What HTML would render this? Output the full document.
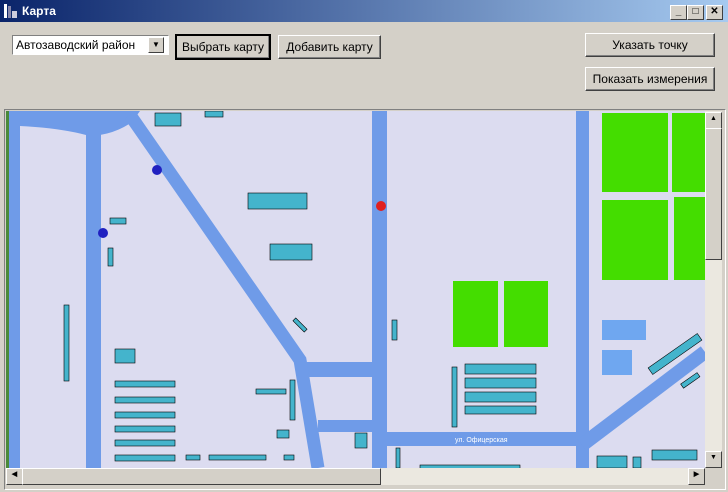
<!DOCTYPE html><html><head><meta charset="utf-8"><style>
body{margin:0;width:728px;height:492px;background:#d4d0c8;font-family:"Liberation Sans",sans-serif;font-size:12px;position:relative;overflow:hidden}
.t{position:absolute;left:0;top:0;width:728px;height:22px;background:linear-gradient(90deg,#0a246a,#a6caf0);}
.t span{position:absolute;left:22px;top:4px;color:#fff;font-weight:bold;font-size:12px}
.wb{position:absolute;top:5px;width:15px;height:13px;background:#d4d0c8;border:1px solid;border-color:#fff #404040 #404040 #fff;font-size:10px;line-height:12px;text-align:center;font-weight:bold}
.btn{position:absolute;background:#d4d0c8;border:1px solid;border-color:#fff #404040 #404040 #fff;box-shadow:inset -1px -1px #808080;text-align:center;line-height:22px;height:22px}
</style></head><body>
<div class="t"><svg style="position:absolute;left:3px;top:3px" width="16" height="16"><rect x="1" y="1" width="3" height="14" fill="#fff"/><rect x="5" y="3" width="3" height="12" fill="#88a"/><rect x="9" y="8" width="5" height="7" fill="#ccd"/></svg><span>Карта</span>
<div class="wb" style="left:670px">_</div><div class="wb" style="left:687px">□</div><div class="wb" style="left:706px">✕</div></div>
<div style="position:absolute;left:12px;top:35px;width:152px;height:18px;background:#fff;border:1px solid;border-color:#808080 #fff #fff #808080;line-height:18px;padding-left:3px">Автозаводский район</div>
<div style="position:absolute;left:148px;top:37px;width:14px;height:14px;background:#d4d0c8;border:1px solid;border-color:#fff #404040 #404040 #fff;font-size:8px;text-align:center;line-height:14px">▼</div>
<div class="btn" style="left:175px;top:34px;width:92px;border:2px solid #000">Выбрать карту</div>
<div class="btn" style="left:278px;top:35px;width:101px">Добавить карту</div>
<div class="btn" style="left:585px;top:33px;width:128px">Указать точку</div>
<div class="btn" style="left:585px;top:67px;width:128px">Показать измерения</div>
<div style="position:absolute;left:4px;top:109px;width:720px;height:379px;border:1px solid;border-color:#808080 #fff #fff #808080"></div>
<svg style="position:absolute;left:6px;top:111px" width="699" height="357" viewBox="6 111 699 357">
<rect x="6" y="111" width="699" height="357" fill="#dcdcf0"/>
<g fill="#6f9be8" stroke="none">
<rect x="9" y="111" width="11" height="357"/>
<rect x="86" y="111" width="15" height="357"/>
<rect x="372" y="111" width="15" height="357"/>
<rect x="576" y="111" width="13" height="357"/>
<rect x="300" y="362" width="72" height="15"/>
<rect x="318" y="420" width="54" height="12"/>
<rect x="387" y="432" width="189" height="14"/>
<path d="M9,111 L140,111 L132,122 Q118,132 100,135 L86,135 Q60,128 20,126 L9,126Z"/>
</g>
<rect x="6" y="111" width="3" height="357" fill="#4a8a3a"/>
<g stroke="#6f9be8" fill="none" stroke-linecap="butt">
<polyline points="130,115 300,360 318,468" stroke-width="13"/>
<line x1="582" y1="445" x2="705" y2="352" stroke-width="14"/>
</g>
<g fill="#44dd00">
<rect x="602" y="113" width="66" height="79"/><rect x="672" y="113" width="33" height="79"/>
<rect x="602" y="200" width="66" height="80"/><rect x="674" y="197" width="31" height="83"/>
<rect x="453" y="281" width="45" height="66"/><rect x="504" y="281" width="44" height="66"/>
</g>
<g fill="#44b4cc" stroke="#000" stroke-width="0.6">
<rect x="155" y="113" width="26" height="13"/><rect x="205" y="111" width="18" height="6"/>
<rect x="248" y="193" width="59" height="16"/><rect x="270" y="244" width="42" height="16"/>
<rect x="110" y="218" width="16" height="6"/><rect x="108" y="248" width="5" height="18"/>
<rect x="64" y="305" width="5" height="76"/><rect x="115" y="349" width="20" height="14"/>
<rect x="115" y="381" width="60" height="6"/><rect x="115" y="397" width="60" height="6"/>
<rect x="115" y="412" width="60" height="6"/><rect x="115" y="426" width="60" height="6"/>
<rect x="115" y="440" width="60" height="6"/><rect x="115" y="455" width="60" height="6"/>
<rect x="186" y="455" width="14" height="5"/><rect x="209" y="455" width="57" height="5"/>
<rect x="284" y="455" width="10" height="5"/><rect x="256" y="389" width="30" height="5"/>
<rect x="290" y="380" width="5" height="40"/><rect x="277" y="430" width="12" height="8"/>
<rect x="355" y="433" width="12" height="15"/><rect x="392" y="320" width="5" height="20"/>
<rect x="452" y="367" width="5" height="60"/>
<rect x="465" y="364" width="71" height="10"/><rect x="465" y="378" width="71" height="10"/>
<rect x="465" y="392" width="71" height="10"/><rect x="465" y="406" width="71" height="8"/>
<rect x="420" y="465" width="100" height="5"/><rect x="396" y="448" width="4" height="20"/>
<rect x="597" y="456" width="30" height="12"/><rect x="633" y="457" width="8" height="11"/>
<rect x="292" y="323" width="16" height="4" transform="rotate(45 300 325)"/>
<rect x="645" y="350" width="60" height="8" transform="rotate(-35 675 354)"/>
<rect x="680" y="378" width="20" height="5" transform="rotate(-35 690 380)"/>
<rect x="652" y="450" width="45" height="10"/>
</g>
<g fill="#6fa7f0"><rect x="602" y="320" width="44" height="20"/><rect x="602" y="350" width="30" height="25"/></g>
<circle cx="157" cy="170" r="5" fill="#2020c0"/><circle cx="103" cy="233" r="5" fill="#2020c0"/>
<circle cx="381" cy="206" r="5" fill="#e02020"/>
<text x="455" y="442" font-size="7" fill="#fff" font-family="Liberation Sans">ул.   Офицерская</text>
</svg>
<div style="position:absolute;left:705px;top:111px;width:17px;height:357px;background:#ebe8e0"></div>
<div class="wb" style="left:705px;top:112px;width:15px;height:15px;font-size:7px">▲</div>
<div style="position:absolute;left:705px;top:128px;width:15px;height:130px;background:#d4d0c8;border:1px solid;border-color:#fff #404040 #404040 #fff"></div>
<div class="wb" style="left:705px;top:451px;width:15px;height:15px;font-size:7px">▼</div>
<div style="position:absolute;left:6px;top:468px;width:699px;height:17px;background:#ebe8e0"></div>
<div class="wb" style="left:6px;top:468px;width:15px;height:15px;font-size:7px">◀</div>
<div style="position:absolute;left:22px;top:468px;width:357px;height:15px;background:#d4d0c8;border:1px solid;border-color:#fff #404040 #404040 #fff"></div>
<div class="wb" style="left:688px;top:468px;width:15px;height:15px;font-size:7px">▶</div>
</body></html>
